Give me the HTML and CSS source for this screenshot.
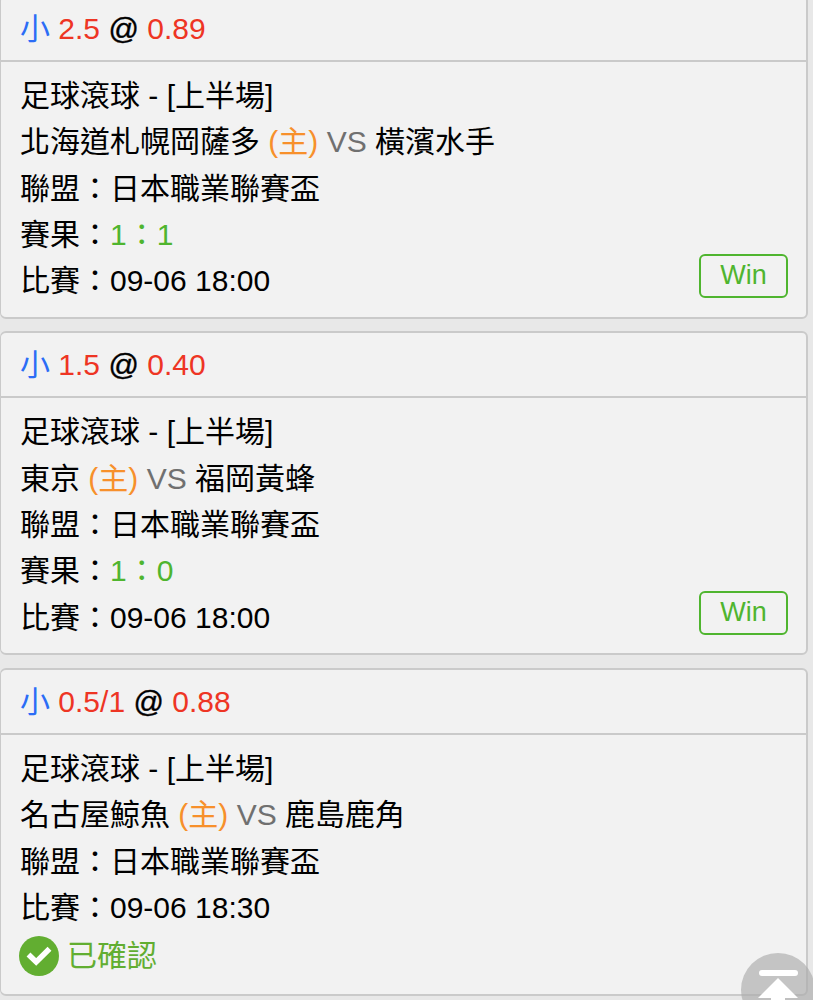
FILE: index.html
```html
<!DOCTYPE html>
<html lang="zh-Hant">
<head>
  <meta charset="UTF-8" />
  <meta name="viewport" content="width=device-width, initial-scale=1.0"/>
  <title>注單記錄</title>
  <link rel="stylesheet" href="styles.css">
</head>
<body>

  <div class="bet-list">

    <div class="bet">
      <div class="bet-head">
        <span class="pick">小</span> <span class="odds">2.5</span> <span class="at">@</span> <span class="odds">0.89</span>
      </div>
      <div class="bet-body">
        <div class="line">足球滾球 - [上半場]</div>
        <div class="line">北海道札幌岡薩多 <span class="home">(主)</span> <span class="vs">VS</span> 橫濱水手</div>
        <div class="line">聯盟：日本職業聯賽盃</div>
        <div class="line">賽果：<span class="score">1：1</span></div>
        <div class="line">比賽：09-06 18:00</div>
        <div class="result">Win</div>
      </div>
    </div>

    <div class="bet">
      <div class="bet-head">
        <span class="pick">小</span> <span class="odds">1.5</span> <span class="at">@</span> <span class="odds">0.40</span>
      </div>
      <div class="bet-body">
        <div class="line">足球滾球 - [上半場]</div>
        <div class="line">東京 <span class="home">(主)</span> <span class="vs">VS</span> 福岡黃蜂</div>
        <div class="line">聯盟：日本職業聯賽盃</div>
        <div class="line">賽果：<span class="score">1：0</span></div>
        <div class="line">比賽：09-06 18:00</div>
        <div class="result">Win</div>
      </div>
    </div>

    <div class="bet">
      <div class="bet-head">
        <span class="pick">小</span> <span class="odds">0.5/1</span> <span class="at">@</span> <span class="odds">0.88</span>
      </div>
      <div class="bet-body">
        <div class="line">足球滾球 - [上半場]</div>
        <div class="line">名古屋鯨魚 <span class="home">(主)</span> <span class="vs">VS</span> 鹿島鹿角</div>
        <div class="line">聯盟：日本職業聯賽盃</div>
        <div class="line">比賽：09-06 18:30</div>
        <div class="status">
          <svg class="status-icon" viewBox="0 0 40 40">
            <circle cx="20" cy="20" r="20" fill="#62ae31"/>
            <path d="M9.5 18.5 L17.2 26 L30.5 12.8" fill="none" stroke="#fff" stroke-width="5.5"/>
          </svg>
          已確認
        </div>
      </div>
    </div>

  </div>

  <a class="to-top" href="#">
    <svg viewBox="0 0 74 74">
      <path d="M21 20 H54" stroke="#fff" stroke-width="6" stroke-linecap="round"/>
      <path d="M37 25 L57 45 H44 V60 H30 V45 H17 Z" fill="#fff"/>
    </svg>
  </a>

</body>
</html>
```

FILE: styles.css
```css
* {
  box-sizing: border-box;
}

body {
  margin: 0;
  height: 1000px;
  overflow: hidden;
  background: #e8e8e8;
  color: #000;
  font-family: "Liberation Sans", "Noto Sans CJK TC", sans-serif;
  font-size: 30px;
  line-height: 46.3px;
}

.bet-list {
  display: flex;
  flex-direction: column;
  gap: 12.5px;
  width: 808px;
  margin-top: -5px;
}

.bet {
  border: 2px solid #cacaca;
  border-left-width: 1px;
  border-radius: 6px;
  background: #f2f2f2;
}

.bet-head {
  height: 65px;
  padding: 9px 19px 0;
  border-bottom: 2px solid #cacaca;
}

.bet-body {
  position: relative;
  padding: 11px 19px 12.5px;
}

.line {
  white-space: nowrap;
}

.pick {
  color: #2b6df6;
}

.odds {
  color: #ee3524;
}

.at {
  -webkit-text-stroke: 0.4px #000;
}

.home {
  color: #f7902b;
}

.vs {
  color: #707070;
}

.score {
  color: #4fb52f;
}

/* sits in the lower right corner of the card */
.result {
  position: absolute;
  right: 18px;
  bottom: 18.5px;
  width: 89px;
  height: 44px;
  border: 2px solid #4fb52f;
  border-radius: 6px;
  color: #4fb52f;
  font-size: 27px;
  line-height: 39px;
  text-align: center;
}

.status {
  display: flex;
  align-items: center;
  gap: 8px;
  height: 50px;
  margin-left: -1px;
  color: #62ae31;
}

.status-icon {
  width: 40px;
  height: 40px;
}

.to-top {
  position: fixed;
  left: 741px;
  top: 953px;
  width: 74px;
  height: 74px;
  border-radius: 50%;
  background: rgba(170, 170, 170, 0.65);
}

.to-top svg {
  display: block;
}
```
